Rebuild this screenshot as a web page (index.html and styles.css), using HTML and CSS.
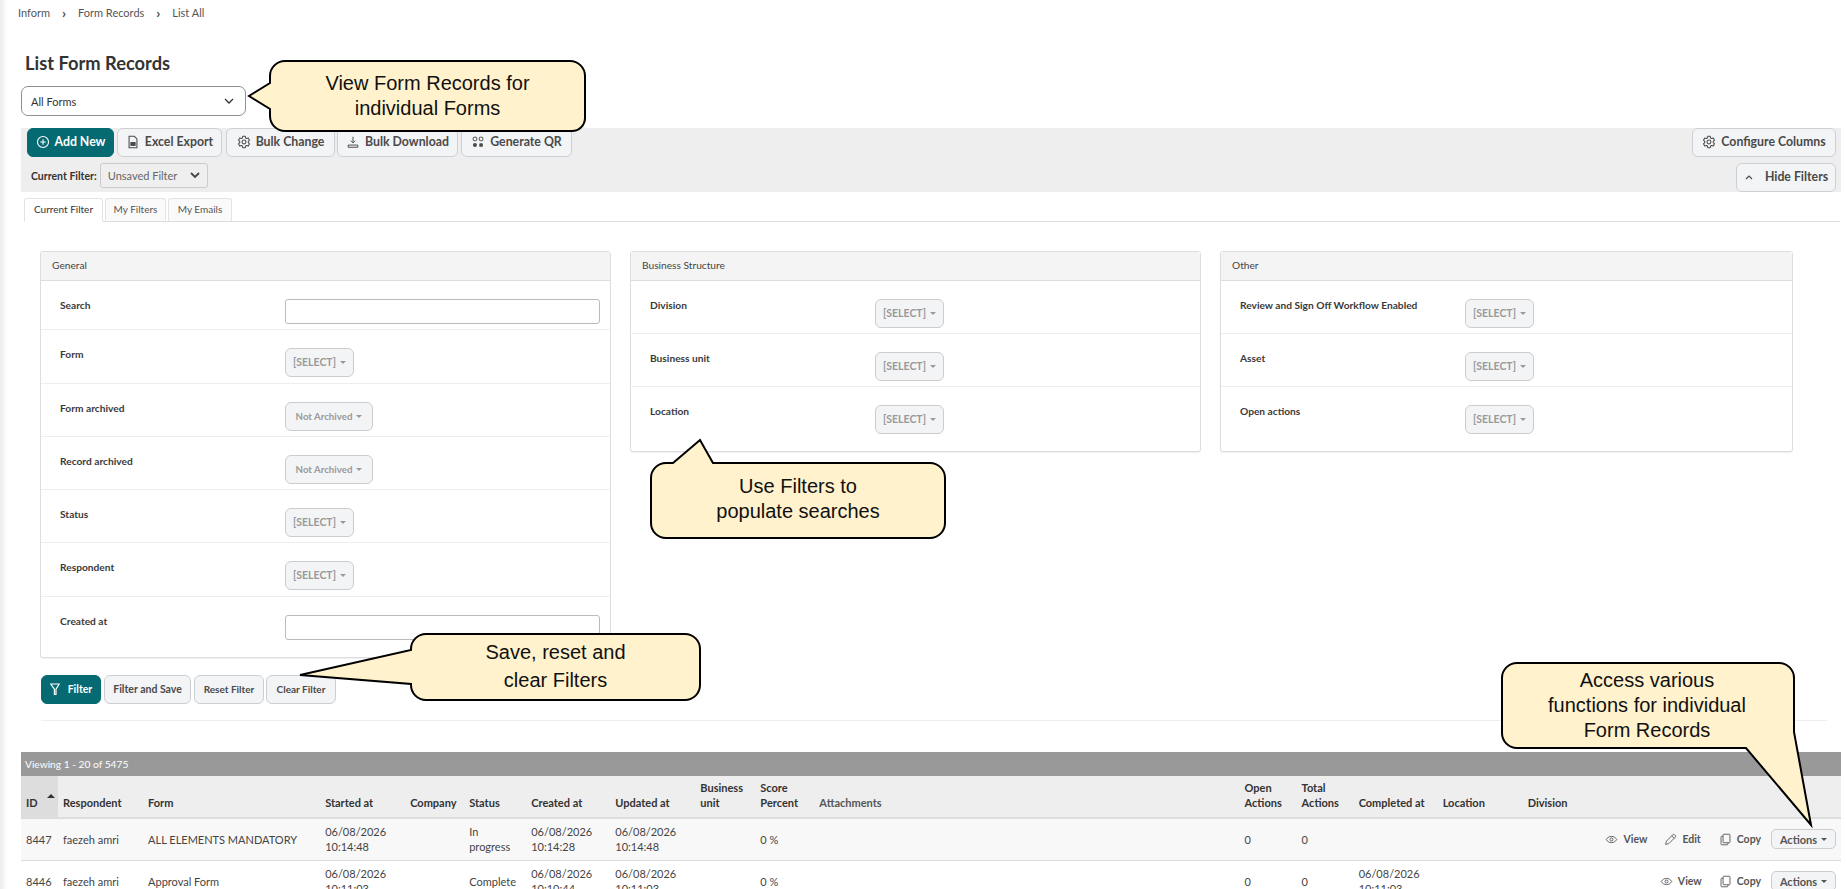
FILE: index.html
```html
<!DOCTYPE html>
<html lang="en">
<head>
<meta charset="utf-8">
<title>List Form Records</title>
<link rel="stylesheet" href="styles.css">
</head>
<body>
<svg class="sprite" width="0" height="0" aria-hidden="true">
  <symbol id="i-gear" viewBox="0 0 16 16"><path fill="none" stroke="currentColor" stroke-width="1.2" stroke-linejoin="round" d="M6.6 1.5h2.8l.4 1.9 1.3.7 1.8-.6 1.4 2.4-1.4 1.3v1.6l1.4 1.3-1.4 2.4-1.8-.6-1.3.7-.4 1.9H6.6l-.4-1.9-1.3-.7-1.8.6-1.4-2.4 1.4-1.3V7.2L1.7 5.9l1.4-2.4 1.8.6 1.3-.7z"/><circle cx="8" cy="8" r="2.2" fill="none" stroke="currentColor" stroke-width="1.2"/></symbol>
  <symbol id="i-eye" viewBox="0 0 16 16"><path fill="none" stroke="currentColor" stroke-width="1.1" d="M1.5 8C3 5.5 5.3 4.2 8 4.2s5 1.3 6.5 3.8c-1.5 2.5-3.8 3.8-6.5 3.8S3 10.5 1.5 8z"/><circle cx="8" cy="8" r="1.8" fill="none" stroke="currentColor" stroke-width="1.1"/></symbol>
  <symbol id="i-copy" viewBox="0 0 16 16"><path fill="none" stroke="currentColor" stroke-width="1.1" d="M6 1.5h6.500a1 1 0 0 1 1 1V11a1 1 0 0 1-1 1H6a1 1 0 0 1-1-1V2.500a1 1 0 0 1 1-1zM5 4H3.500a1 1 0 0 0-1 1v8.500a1 1 0 0 0 1 1H10a1 1 0 0 0 1-1V12"/></symbol>
  <symbol id="i-pencil" viewBox="0 0 16 16"><path fill="none" stroke="currentColor" stroke-width="1.1" stroke-linejoin="round" d="M10.800 2.200a1.700 1.700 0 0 1 2.400 0l.6.6a1.700 1.700 0 0 1 0 2.400L6 13l-4 1 1-4zM9.500 3.500l3 3"/></symbol>
</svg>
<div class="page">
  <nav class="crumbs">
    <span>Inform</span><span class="crumb-sep">›</span><span>Form Records</span><span class="crumb-sep">›</span><span>List All</span>
  </nav>
  <h1 class="title">List Form Records</h1>
  <div class="form-select"><span>All Forms</span>
    <svg class="form-select-chev" width="10" height="6" viewBox="0 0 10 6"><path d="M1 1l4 4 4-4" fill="none" stroke="#333" stroke-width="1.3"/></svg>
  </div>

  <section class="toolbar">
    <div class="toolbar-row">
      <div class="btn-group">
        <button class="btn btn-primary btn-add">
          <svg class="ic" viewBox="0 0 16 16"><circle cx="8" cy="8" r="6.3" fill="none" stroke="currentColor" stroke-width="1.3"/><path d="M8 4.800v6.400M4.800 8h6.400" stroke="currentColor" stroke-width="1.3"/></svg>Add New</button>
        <button class="btn btn-excel">
          <svg class="ic" viewBox="0 0 16 16"><path fill="none" stroke="currentColor" stroke-width="1.2" d="M3.500 1.500h6l3 3v10h-9z"/><rect x="5" y="8" width="6" height="4.500" fill="currentColor"/></svg>Excel Export</button>
        <button class="btn btn-bulk"><svg class="ic"><use href="#i-gear"/></svg>Bulk Change</button>
        <button class="btn btn-download">
          <svg class="ic" viewBox="0 0 16 16"><path d="M8 2v7M5.500 6.500L8 9l2.500-2.500M2.500 14h11v-2.500h-11z" fill="none" stroke="currentColor" stroke-width="1.1"/></svg>Bulk Download</button>
        <button class="btn btn-qr">
          <svg class="ic" viewBox="0 0 16 16"><rect x="2.500" y="2.500" width="4" height="4" rx="1" fill="none" stroke="currentColor" stroke-width="1.1"/><rect x="9.500" y="2.500" width="4" height="4" rx="1" fill="none" stroke="currentColor" stroke-width="1.1"/><circle cx="4.500" cy="11.500" r="2.300" fill="currentColor"/><rect x="9.500" y="9.500" width="4" height="4" rx="1" fill="currentColor"/></svg>Generate QR</button>
      </div>
      <button class="btn btn-config"><svg class="ic"><use href="#i-gear"/></svg>Configure Columns</button>
    </div>
    <div class="toolbar-row toolbar-row-2">
      <div class="filter-pick">
        <span class="filter-pick-label">Current Filter:</span>
        <div class="filter-select"><span>Unsaved Filter</span>
          <svg width="10" height="7" viewBox="0 0 10 7"><path d="M1 1l4 4 4-4" fill="none" stroke="#444" stroke-width="1.8"/></svg>
        </div>
      </div>
      <button class="btn btn-hide">
        <svg class="ic-small" viewBox="0 0 10 6"><path d="M2 5l3-3 3 3" fill="none" stroke="currentColor" stroke-width="1.2"/></svg>Hide Filters</button>
    </div>
  </section>

  <div class="tabs">
    <div class="tab tab-active tab-current">Current Filter</div>
    <div class="tab tab-filters">My Filters</div>
    <div class="tab tab-emails">My Emails</div>
  </div>

  <div class="panels">
    <section class="panel">
      <header class="panel-head">General</header>
      <div class="row row-search"><label>Search</label><div class="text-input"></div></div>
      <div class="row row-tall"><label>Form</label><div class="dd dd-select">[SELECT]<i class="caret"></i></div></div>
      <div class="row"><label>Form archived</label><div class="dd dd-archived">Not Archived<i class="caret"></i></div></div>
      <div class="row"><label>Record archived</label><div class="dd dd-archived">Not Archived<i class="caret"></i></div></div>
      <div class="row"><label>Status</label><div class="dd dd-select">[SELECT]<i class="caret"></i></div></div>
      <div class="row row-tall"><label>Respondent</label><div class="dd dd-select">[SELECT]<i class="caret"></i></div></div>
      <div class="row row-last"><label>Created at</label><div class="text-input"></div></div>
    </section>
    <section class="panel">
      <header class="panel-head">Business Structure</header>
      <div class="row"><label>Division</label><div class="dd dd-select">[SELECT]<i class="caret"></i></div></div>
      <div class="row"><label>Business unit</label><div class="dd dd-select">[SELECT]<i class="caret"></i></div></div>
      <div class="row row-last"><label>Location</label><div class="dd dd-select">[SELECT]<i class="caret"></i></div></div>
    </section>
    <section class="panel">
      <header class="panel-head">Other</header>
      <div class="row"><label>Review and Sign Off Workflow Enabled</label><div class="dd dd-select">[SELECT]<i class="caret"></i></div></div>
      <div class="row"><label>Asset</label><div class="dd dd-select">[SELECT]<i class="caret"></i></div></div>
      <div class="row row-last"><label>Open actions</label><div class="dd dd-select">[SELECT]<i class="caret"></i></div></div>
    </section>
  </div>

  <div class="filter-actions">
    <button class="btn btn-primary fa-filter">
      <svg class="ic-funnel" viewBox="0 0 10 12"><path d="M.8 1h8.400L6 6.200V11.500H4.400V6.200z" fill="none" stroke="currentColor" stroke-width="1.2"/></svg>Filter</button>
    <button class="btn fa-save">Filter and Save</button>
    <button class="btn fa-reset">Reset Filter</button>
    <button class="btn fa-clear">Clear Filter</button>
  </div>
  <hr class="divider">

  <div class="view-bar">Viewing 1 - 20 of 5475</div>
  <table class="records">
    <colgroup>
      <col class="c-id"><col class="c-resp"><col class="c-form"><col class="c-date"><col class="c-company"><col class="c-status"><col class="c-created"><col class="c-date"><col class="c-unit"><col class="c-score"><col class="c-attach"><col class="c-count"><col class="c-count"><col class="c-created"><col class="c-date"><col class="c-div"><col class="c-actions">
    </colgroup>
    <thead>
      <tr>
        <th class="th-sort">ID<i class="sort-up"></i></th><th>Respondent</th><th>Form</th><th>Started at</th><th>Company</th><th>Status</th><th>Created at</th><th>Updated at</th><th>Business unit</th><th>Score Percent</th><th class="th-attach">Attachments</th><th>Open Actions</th><th>Total Actions</th><th>Completed at</th><th>Location</th><th>Division</th><th></th>
      </tr>
    </thead>
    <tbody>
      <tr>
        <td>8447</td><td>faezeh amri</td><td>ALL ELEMENTS MANDATORY</td><td>06/08/2026 10:14:48</td><td></td><td>In progress</td><td>06/08/2026 10:14:28</td><td>06/08/2026 10:14:48</td><td></td><td>0 %</td><td></td><td>0</td><td>0</td><td></td><td></td><td></td>
        <td><div class="acts">
          <span class="act act-view"><svg class="ic"><use href="#i-eye"/></svg>View</span>
          <span class="act act-edit"><svg class="ic"><use href="#i-pencil"/></svg>Edit</span>
          <span class="act act-copy"><svg class="ic"><use href="#i-copy"/></svg>Copy</span>
          <span class="act-menu">Actions<i class="caret caret-dark"></i></span>
        </div></td>
      </tr>
      <tr>
        <td>8446</td><td>faezeh amri</td><td>Approval Form</td><td>06/08/2026 10:11:03</td><td></td><td>Complete</td><td>06/08/2026 10:10:44</td><td>06/08/2026 10:11:03</td><td></td><td>0 %</td><td></td><td>0</td><td>0</td><td>06/08/2026 10:11:03</td><td></td><td></td>
        <td><div class="acts">
          <span class="act act-view"><svg class="ic"><use href="#i-eye"/></svg>View</span>
          <span class="act act-copy"><svg class="ic"><use href="#i-copy"/></svg>Copy</span>
          <span class="act-menu">Actions<i class="caret caret-dark"></i></span>
        </div></td>
      </tr>
    </tbody>
  </table>

  <aside class="callout callout-forms">
    <svg class="callout-shape" viewBox="0 0 346 74"><path d="M38 2h285a15 15 0 0 1 15 15v42a13 13 0 0 1-13 13H38a15 15 0 0 1-15-15V50L2 37l21-13V17A15 15 0 0 1 38 2z"/></svg>
    <p class="callout-text">View Form Records for<br>individual Forms</p>
  </aside>
  <aside class="callout callout-search">
    <svg class="callout-shape" viewBox="0 0 298 102"><path d="M24 25h-7a15 15 0 0 0-15 15v45a15 15 0 0 0 15 15h264a15 15 0 0 0 15-15V40a15 15 0 0 0-15-15H64L51 2z"/></svg>
    <p class="callout-text">Use Filters to<br>populate searches</p>
  </aside>
  <aside class="callout callout-save">
    <svg class="callout-shape" viewBox="0 0 404 70"><path d="M113 18v-1a15 15 0 0 1 15-15h259a15 15 0 0 1 15 15v36a15 15 0 0 1-15 15H128a15 15 0 0 1-15-15v-1L2 43z"/></svg>
    <p class="callout-text">Save, reset and<br>clear Filters</p>
  </aside>
  <aside class="callout callout-actions">
    <svg class="callout-shape" viewBox="0 0 316 166"><path d="M17 2h262a15 15 0 0 1 15 15v54l17 93-65-77H17a15 15 0 0 1-15-15V17A15 15 0 0 1 17 2z"/></svg>
    <p class="callout-text">Access various<br>functions for individual<br>Form Records</p>
  </aside>
</div>
</body>
</html>
```
FILE: styles.css
```css
* { box-sizing: border-box; }
html, body { margin: 0; padding: 0; }
body {
  background: #fff;
  color: #3a3a3a;
  font-family: Lato, "Open Sans", sans-serif;
  font-size: 11px;
  overflow: hidden;
}
.sprite { position: absolute; }
.page {
  position: relative;
  width: 1846px;
  height: 889px;
  overflow: hidden;
  background: linear-gradient(to right, #ececec, #fff 7px);
}

/* breadcrumb */
.crumbs {
  display: flex;
  align-items: center;
  height: 24px;
  padding-left: 18px;
  font-size: 11px;
  color: #555;
}
.crumb-sep { width: 28px; text-align: center; font-size: 14px; font-weight: 700; color: #444; }

.title {
  margin: 27px 0 0 25px;
  font-size: 18.3px;
  line-height: 24px;
  font-weight: 700;
  color: #333;
}
.form-select {
  display: flex;
  align-items: center;
  justify-content: space-between;
  width: 225px;
  height: 30px;
  margin: 11px 0 0 21px;
  padding: 0 11px 0 9px;
  border: 1px solid #8f8f8f;
  border-radius: 7px;
  background: #fff;
  color: #333;
  font-size: 11px;
}

/* toolbar */
.toolbar {
  width: 1820px;
  height: 64px;
  margin: 12px 0 0 21px;
  background: #eee;
}
.toolbar-row {
  display: flex;
  justify-content: space-between;
  align-items: flex-start;
  height: 35px;
  padding: 0 5px 0 6px;
}
.toolbar-row-2 { height: 29px; padding-left: 10px; }
.btn-group { display: flex; gap: 3px; }
.btn {
  display: inline-flex;
  align-items: center;
  justify-content: center;
  gap: 5px;
  height: 29px;
  padding: 0 0 2px;
  border: 1px solid #ccd0d4;
  border-radius: 6px;
  background: #f3f4f6;
  color: #4a4a4a;
  font-family: inherit;
  font-size: 12.3px;
  font-weight: 700;
}
.btn-primary { background: #056a72; border-color: #056a72; color: #fff; }
.ic { width: 14px; height: 14px; flex: none; }
.ic-small { width: 10px; height: 6px; margin-right: 6px; }
.ic-funnel { width: 10px; height: 12px; margin-right: 3px; flex: none; }
.btn-add { width: 87px; }
.btn-excel { width: 105px; }
.btn-bulk { width: 109px; margin-left: 1px; }
.btn-download { width: 121px; margin-left: -1px; }
.btn-qr { width: 111px; }
.btn-config { width: 144px; }
.btn-hide { width: 100px; }

.filter-pick { display: flex; align-items: center; gap: 3px; height: 25px; }
.filter-pick-label { font-weight: 700; color: #333; font-size: 10.5px; }
.filter-select {
  display: flex;
  align-items: center;
  justify-content: space-between;
  width: 108px;
  height: 25px;
  padding: 0 7px;
  border: 1px solid #ccc;
  border-radius: 3px;
  background: #efefef;
  color: #666;
  font-size: 11px;
}

/* tabs */
.tabs {
  display: flex;
  align-items: flex-end;
  height: 30px;
  margin: 0 6px 0 24px;
  border-bottom: 1px solid #ddd;
}
.tab {
  display: flex;
  align-items: center;
  justify-content: center;
  height: 24px;
  margin-bottom: -1px;
  padding-bottom: 2px;
  border: 1px solid #e3e3e3;
  border-bottom: 1px solid #ddd;
  border-radius: 3px 3px 0 0;
  font-size: 10px;
  color: #555;
  background: #fafafa;
}
.tab-active { background: #fff; border-bottom-color: #fff; color: #333; }
.tab-current { width: 79px; margin-right: 2px; }
.tab-filters { width: 61px; margin-right: 2px; }
.tab-emails { width: 64px; }

/* filter panels */
.panels {
  display: grid;
  grid-template-columns: 571px 571px 573px;
  gap: 19px;
  align-items: start;
  margin: 29px 0 0 40px;
}
.panel {
  border: 1px solid #ddd;
  border-radius: 3px;
  background: #fff;
  box-shadow: 0 1px 1px rgba(0, 0, 0, .06);
}
.panel-head {
  display: flex;
  align-items: center;
  height: 29px;
  padding: 0 0 3px 11px;
  background: #f4f4f4;
  border-bottom: 1px solid #ddd;
  font-size: 10.2px;
  color: #444;
}
.row {
  display: grid;
  grid-template-columns: 225px 1fr;
  align-items: start;
  padding: 18px 10px 5px 19px;
  border-bottom: 1px solid #eee;
}
.row label { margin-top: -1px; font-size: 10.2px; line-height: 14px; font-weight: 700; color: #3a3a3a; }
.row-tall { padding-bottom: 6px; }
.row-search { padding-bottom: 5px; }
.row-last { padding-bottom: 17px; border-bottom: 0; }
.text-input {
  height: 25px;
  border: 1px solid #bbb;
  border-radius: 3px;
  background: #fff;
}
.dd {
  display: inline-flex;
  align-items: center;
  justify-content: center;
  justify-self: start;
  gap: 4px;
  height: 29px;
  padding-bottom: 1px;
  border: 1px solid #ccc;
  border-radius: 6px;
  background: #f3f4f6;
  color: #999;
  font-weight: 700;
}
.dd-select { width: 69px; font-size: 10.5px; }
.dd-archived { width: 88px; font-size: 9.7px; }
.caret {
  width: 0;
  height: 0;
  border-left: 3px solid transparent;
  border-right: 3px solid transparent;
  border-top: 3px solid #999;
}
.caret-dark { border-top-color: #555; }

.filter-actions { display: flex; margin: 17px 0 0 41px; }
.filter-actions .btn { font-size: 10.5px; }
.filter-actions .fa-reset, .filter-actions .fa-clear { font-size: 10px; }
.fa-filter { width: 60px; margin-right: 3px; }
.fa-save { width: 87px; margin-right: 3px; }
.fa-reset { width: 70px; margin-right: 2px; }
.fa-clear { width: 70px; }
.divider {
  width: 1786px;
  height: 1px;
  margin: 16px 0 0 41px;
  border: 0;
  background: #eee;
}

/* records table */
.view-bar {
  display: flex;
  align-items: center;
  width: 1820px;
  height: 24px;
  margin: 31px 0 0 21px;
  padding-left: 4px;
  background: #999;
  color: #fff;
  font-size: 10.2px;
}
.records {
  width: 1820px;
  margin-left: 21px;
  table-layout: fixed;
  border-collapse: collapse;
}
.c-id { width: 37px; }
.c-resp { width: 85px; }
.c-form { width: 177px; }
.c-date { width: 85px; }
.c-company { width: 59px; }
.c-status { width: 62px; }
.c-created { width: 84px; }
.c-unit { width: 60px; }
.c-score { width: 59px; }
.c-attach { width: 425px; }
.c-count { width: 57px; }
.c-div { width: 70px; }
.c-actions { width: 248px; }
.records th {
  height: 42px;
  padding: 2px 5px 7px;
  background: #eee;
  border-bottom: 2px solid #ddd;
  vertical-align: bottom;
  text-align: left;
  font-size: 11px;
  line-height: 15px;
  font-weight: 700;
  color: #333;
}
.records .th-sort { position: relative; background: #ddd; }
.records .th-attach { color: #555; }
.sort-up {
  position: absolute;
  right: 3px;
  top: 18px;
  border-left: 4px solid transparent;
  border-right: 4px solid transparent;
  border-bottom: 4px solid #333;
}
.records td {
  height: 42px;
  padding: 3px 5px;
  border-bottom: 1px solid #ddd;
  font-size: 11px;
  line-height: 15px;
  color: #444;
}
.records tbody tr:first-child td { background: #f8f8f8; }
.acts {
  display: flex;
  justify-content: flex-end;
  align-items: center;
}
.act { display: inline-flex; align-items: center; gap: 5px; font-weight: 700; color: #555; font-size: 10.5px; }
.act .ic { width: 13px; height: 13px; }
.act-view { margin-right: 17px; }
.act-edit { margin-right: 18px; }
.act-copy { margin-right: 10px; }
.act-menu {
  display: inline-flex;
  align-items: center;
  justify-content: center;
  gap: 4px;
  width: 65px;
  height: 20px;
  border: 1px solid #ccc;
  border-radius: 5px;
  background: #f3f4f6;
  font-weight: 700;
  color: #555;
  font-size: 11px;
}

/* annotation callouts */
.callout { position: absolute; }
.callout-shape { position: absolute; inset: 0; width: 100%; height: 100%; overflow: visible; }
.callout-shape path { fill: #fff2cc; stroke: #000; stroke-width: 2; }
.callout-text {
  position: absolute;
  margin: 0;
  text-align: center;
  color: #111;
  font-family: "Liberation Sans", Arial, sans-serif;
  font-size: 20px;
  line-height: 25px;
}
.callout-forms { left: 247px; top: 59px; width: 346px; height: 74px; }
.callout-forms .callout-text { left: 23px; right: 8px; top: 12px; }
.callout-search { left: 649px; top: 438px; width: 298px; height: 102px; }
.callout-search .callout-text { left: 0; right: 0; top: 36px; }
.callout-save { left: 298px; top: 632px; width: 404px; height: 70px; }
.callout-save .callout-text { left: 113px; right: 2px; top: 6px; line-height: 28px; }
.callout-actions { left: 1500px; top: 661px; width: 316px; height: 166px; }
.callout-actions .callout-text { left: 0; right: 22px; top: 7px; }
```
